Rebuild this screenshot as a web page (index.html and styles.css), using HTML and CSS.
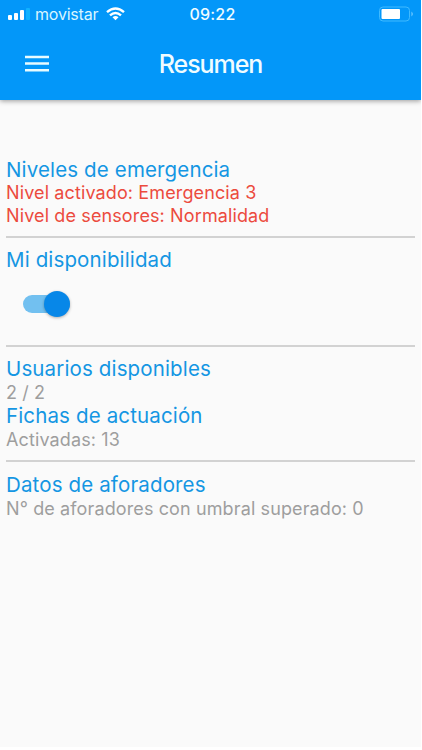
FILE: index.html
```html
<!DOCTYPE html>
<html lang="es">
<head>
<meta charset="utf-8">
<title>Resumen</title>
<link rel="stylesheet" href="styles.css">
</head>
<body>
<div class="screen">
  <header class="header">
    <div class="status">
      <div class="carrier">
        <svg width="22" height="12" viewBox="0 0 22 12" fill="#fff"><rect x="0" y="7" width="4" height="5" rx="1"/><rect x="6" y="5" width="4" height="7" rx="1"/><rect x="12" y="2" width="4" height="10" rx="1"/><rect x="18" y="0" width="4" height="12" rx="1" fill="#10b2ff"/></svg>
        <span class="name">movistar</span>
        <svg class="wifi" width="19" height="14" viewBox="0 0 19 14" fill="none" stroke="#fff" stroke-width="2.400"><path d="M1 5.200Q9.500-2.400 18 5.200M4 8.400Q9.500 3.400 15 8.400"/><path d="M6.500 10.300Q9.500 7.800 12.500 10.300L9.500 13.300Z" fill="#fff" stroke="none"/></svg>
      </div>
      <span class="time">09:22</span>
      <svg class="battery" width="35" height="16" viewBox="0 0 35 16"><rect x=".5" y="1" width="30" height="14" rx="3.500" fill="none" stroke="#40baff"/><rect x="2.500" y="3" width="18.500" height="10" rx="1" fill="#fff"/><path d="M32.500 5.500q2.500 2.500 0 5z" fill="#7fd0ff"/></svg>
    </div>
    <div class="toolbar">
      <svg class="menu" width="24" height="18" viewBox="0 0 24 18" fill="#e8fbff"><path d="M0 .7h24v2.600H0zM0 7.200h24v2.600H0zM0 13.900h24v2.600H0z"/></svg>
      <h1>Resumen</h1>
    </div>
  </header>
  <main>
    <section class="levels"><h2>Niveles de emergencia</h2><p>Nivel activado: Emergencia 3</p><p>Nivel de sensores: Normalidad</p></section>
    <section class="availability"><h2>Mi disponibilidad</h2><div class="switch"><span class="thumb"></span></div></section>
    <section class="users"><h2>Usuarios disponibles</h2><p>2 / 2</p><h2>Fichas de actuación</h2><p>Activadas: 13</p></section>
    <section class="gauges"><h2>Datos de aforadores</h2><p>N° de aforadores con umbral superado: 0</p></section>
  </main>
</div>
</body>
</html>
```
FILE: styles.css
```css
* { box-sizing: border-box; }
body { margin: 0; background: #fff; font-family: Inter, sans-serif; }
.screen { width: 421px; height: 747px; background: #fafafa; overflow: hidden; }
.header { height: 100px; background: #0397f9; color: #f0fcff; box-shadow: 0 1px 5px rgba(0,0,0,.4); }
.status { height: 28px; display: grid; grid-template-columns: 1fr auto 1fr; align-items: center; padding: 0 7px 0 8px; }
.carrier { display: flex; align-items: center; }
.name { font-size: 16px; margin-left: 5px; letter-spacing: -.2px; color: #d8f5ff; }
.wifi { margin-left: 8px; }
.time { font-size: 16px; font-weight: 500; letter-spacing: .2px; padding-left: 3px; }
.battery { justify-self: end; }
.toolbar { height: 72px; display: grid; grid-template-columns: 1fr auto 1fr; align-items: center; padding: 0 25px; }
h1 { margin: 0; font-size: 25px; font-weight: 500; letter-spacing: -1.050px; }
main { padding: 57px 6px 0; }
section { border-bottom: 2px solid #d2d2d2; }
h2, p { margin: 0; font-weight: 400; white-space: nowrap; }
h2 { font-size: 20.500px; line-height: 24px; color: #1496e3; letter-spacing: .140px; }
p { font-size: 18px; line-height: 23px; color: #9e9e9e; letter-spacing: .120px; }
.levels { height: 81px; }
.levels h2 { line-height: 25px; }
.levels p { color: #ec4b3e; line-height: 22.500px; }
.availability { height: 109px; padding-top: 10px; }
.switch { margin: 23px 0 0 17px; width: 47px; height: 18px; border-radius: 9px; background: #72c0f0; display: flex; justify-content: flex-end; align-items: center; }
.thumb { width: 26px; height: 26px; flex: none; border-radius: 50%; background: #0787e8; box-shadow: 0 1px 3px rgba(0,0,0,.3); }
.users { height: 115px; padding-top: 10px; }
.gauges { padding-top: 11px; border: 0; }
```
